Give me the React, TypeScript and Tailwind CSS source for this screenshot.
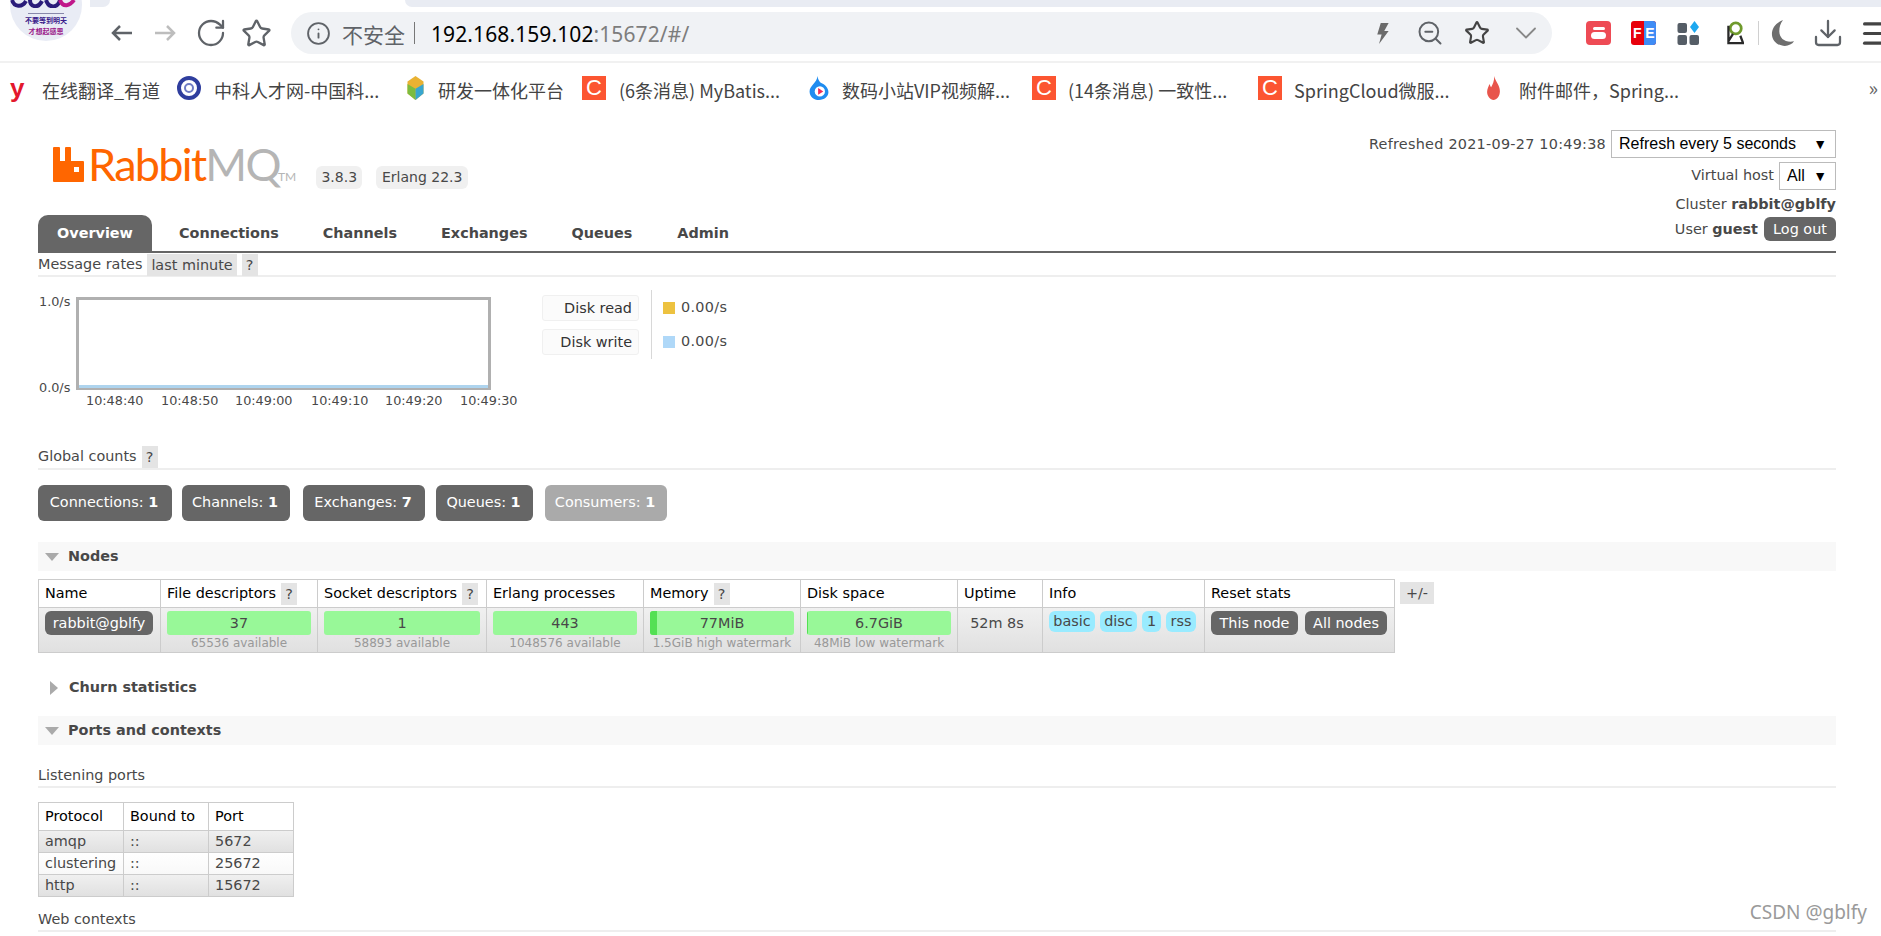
import React from "react";
import { ChevronDown, Download, Info, Menu, RotateCw, Star, ZoomOut } from "lucide-react";

const cjk = "font-['Noto_Sans_CJK_SC','Noto_Sans',sans-serif]";

const CIcon = () => (
  <span className="w-6 h-6 bg-[#fc5531] text-white text-[22px] leading-6 text-center shrink-0 font-['Liberation_Sans',sans-serif]">C</span>
);

const Bookmark = ({ icon, text, width, gap }: { icon: React.ReactNode; text: string; width: string; gap: string }) => (
  <div className={`flex items-center shrink-0 ${width}`}>
    {icon}
    <span className={`${gap} mt-[5px] whitespace-nowrap`}>{text}</span>
  </div>
);

const Help = () => <span className="bg-[#e4e4e4] h-[22px] w-4 ml-[5px] text-center leading-[22px] inline-block">?</span>;

const Section = ({ title, open, shaded }: { title: string; open?: boolean; shaded?: boolean }) => (
  <div className={`h-[29px] flex items-center font-bold ${shaded ? "bg-[#f8f8f8]" : ""}`}>
    {open ? (
      <span className="ml-[7px] w-0 h-0 border-x-[7px] border-x-transparent border-t-[8px] border-t-[#aaaaaa]" />
    ) : (
      <span className="ml-[12px] mr-[2px] w-0 h-0 border-y-[7px] border-y-transparent border-l-[8px] border-l-[#aaaaaa]" />
    )}
    <span className="ml-[9px]">{title}</span>
  </div>
);

const Count = ({ label, n, width, light }: { label: string; n: number; width: string; light?: boolean }) => (
  <div className={`h-9 rounded-[6px] flex items-center justify-center pr-[2px] text-white whitespace-nowrap ${width} ${light ? "bg-[#aaaaaa]" : "bg-[#666666]"}`}>
    {label}:&nbsp;<b>{n}</b>
  </div>
);

const Meter = ({ value, sub, used }: { value: string; sub: string; used?: string }) => (
  <td className="border border-[#cccccc] px-[6px] pt-[3px] align-top text-center">
    <div className="relative h-6 rounded-[3px] bg-[#98f898] leading-6 overflow-hidden">
      {used && <div className={`absolute left-0 top-0 bottom-0 bg-[#54e054] ${used}`} />}
      <span className="relative">{value}</span>
    </div>
    <div className="text-[12px] leading-[15px] text-[#999999] mt-px whitespace-nowrap">{sub}</div>
  </td>
);

const Th = ({ children, help }: { children: React.ReactNode; help?: boolean }) => (
  <th className="border border-[#cccccc] px-[6px] font-normal text-left text-black whitespace-nowrap">
    <div className="flex items-center">
      <span>{children}</span>
      {help && <span className="ml-[5px] bg-[#e4e4e4] h-[22px] w-4 text-center leading-[22px] text-[#484848]">?</span>}
    </div>
  </th>
);

const Badge = ({ children, width }: { children: React.ReactNode; width: string }) => (
  <span className={`bg-[#99ebff] rounded-[6px] h-[21px] leading-[21px] text-center ${width}`}>{children}</span>
);

const SmallButton = ({ children, className }: { children: React.ReactNode; className?: string }) => (
  <span className={`bg-[#666666] text-white rounded-[6px] h-6 leading-6 text-center whitespace-nowrap inline-block ${className ?? ""}`}>{children}</span>
);

const Legend = ({ label, color }: { label: string; color: string }) => (
  <div className="flex items-center h-[26px]">
    <div className="w-[97px] h-[26px] bg-[#fbfbfb] border border-[#f0f0f0] rounded-[3px] text-right pr-[6px] leading-[24px] text-[#333333]">{label}</div>
    <div className="w-[24px]" />
    <span className={`w-3 h-3 ${color}`} />
    <span className="ml-[6px] tracking-[0.3px]">0.00/s</span>
  </div>
);

const PortRow = ({ cells, gradient }: { cells: string[]; gradient: string }) => (
  <tr className={`h-[22px] ${gradient}`}>
    {cells.map((c) => (
      <td key={c} className="border border-[#cccccc] px-[6px] leading-none">{c}</td>
    ))}
  </tr>
);

const ArrowIcon = ({ flip, color }: { flip?: boolean; color: string }) => (
  <svg viewBox="0 0 22 18" className={`w-[22px] h-[18px] shrink-0 ${flip ? "-scale-x-100" : ""}`} fill="none" stroke={color} strokeWidth="2.500">
    <path d="M22 9H3M10 2 3 9l7 7" />
  </svg>
);

const App = () => {
  return (
    <div className="relative w-[1881px] h-[936px] overflow-hidden bg-white">
      {/* avatar of the tab strip */}
      <div className={`absolute left-[10px] top-[-31px] w-[72px] h-[72px] rounded-full bg-[#e9ecf5] overflow-hidden flex flex-col items-center pt-[31px] ${cjk}`}>
        <svg width="72" height="8" viewBox="0 0 72 8" className="shrink-0">
          <path d="M2 0c2 7 10 8 14 1M20 0c0 7 8 9 12 1M36 0c3 9 12 8 14 0" stroke="#2a1c7a" strokeWidth="4" fill="none" />
          <path d="M50 0c3 8 10 6 14 0" stroke="#c0178a" strokeWidth="4" fill="none" />
        </svg>
        <div className="w-9 h-px bg-[#8888aa] mt-[5px]" />
        <div className="text-[7px] leading-[11px] font-bold text-[#3a1a8a] whitespace-nowrap mt-[1px]">不要等到明天</div>
        <div className="text-[7px] leading-[11px] font-bold text-[#9a1a8a] whitespace-nowrap">才想起感恩</div>
      </div>

      {/* tab strip */}
      <div className="h-[7px] flex">
        <div className="w-[90px]" />
        <div className="w-[20px] bg-[#e9ecf3] rounded-br-lg" />
        <div className="w-[295px]" />
        <div className="flex-1 bg-[#e9ecf3] rounded-bl-lg" />
      </div>

      {/* toolbar */}
      <div className="h-[56px] border-b-2 border-[#f1f1f1] flex items-center pb-[2px] text-[#5f6368]">
        <div className="w-[110px] shrink-0" />
        <ArrowIcon color="#5f6368" />
        <div className="w-[23px] shrink-0" />
        <ArrowIcon flip color="#bdbdbd" />
        <RotateCw className="ml-[18px] w-8 h-8 shrink-0" strokeWidth={1.700} />
        <Star className="ml-[14px] w-[31px] h-[31px] shrink-0" strokeWidth={1.800} />
        <div className="ml-[19px] w-[1261px] h-[42px] rounded-[21px] bg-[#f0f2f5] flex items-center shrink-0">
          <Info className="ml-[15px] w-[25px] h-[25px] shrink-0" strokeWidth={1.800} />
          <span className={`ml-[11px] pt-[3px] text-[21px] text-[#5f6368] whitespace-nowrap ${cjk}`}>不安全</span>
          <span className="ml-[9px] w-px h-[22px] bg-[#777777]" />
          <span className="ml-[16px] pt-[3px] text-[21px] tracking-[0.1px] text-black font-['Noto_Sans',sans-serif] whitespace-nowrap">
            192.168.159.102<span className="text-[#7d7d7d]">:15672/#/</span>
          </span>
          <div className="flex-1" />
          <svg viewBox="0 0 16 24" className="w-[15px] h-[21px] fill-[#6b6b6b] shrink-0"><path d="M6 0h9L10 9h5L4 24l3-11H2z" /></svg>
          <ZoomOut className="ml-[26px] w-7 h-7 shrink-0" strokeWidth={1.700} />
          <Star className="ml-[20px] w-[26px] h-[26px] text-[#444444] shrink-0" strokeWidth={2} />
          <ChevronDown className="ml-[18px] mr-[8px] w-9 h-9 text-[#888888] shrink-0" strokeWidth={1.200} />
        </div>
        <div className="ml-[34px] w-[25px] h-[24px] rounded-[4px] bg-[#ee4b55] flex flex-col items-center justify-center gap-[2px] shrink-0">
          <span className="w-[12px] h-[3px] bg-white rounded-sm" />
          <span className="w-[15px] h-[7px] bg-white rounded-sm" />
        </div>
        <div className="ml-[20px] w-[25px] h-[24px] rounded-[3px] bg-[#e8000b] text-white text-[14px] font-bold leading-6 flex overflow-hidden shrink-0 font-['Liberation_Sans',sans-serif]">
          <span className="w-[13px] pl-[2px]">F</span>
          <span className="w-[12px] bg-[#3f8cf5] text-center">E</span>
        </div>
        <svg viewBox="0 0 22 24" className="ml-[21px] w-[23px] h-[24px] shrink-0">
          <rect x="0" y="2" width="9.500" height="10" rx="2" fill="#555d66" />
          <rect x="0" y="14" width="9.500" height="10" rx="2" fill="#555d66" />
          <rect x="12" y="14" width="9.500" height="10" rx="2" fill="#555d66" />
          <path d="M17 0l4.500 6-4.500 6-4.500-6z" fill="#1da8f0" />
        </svg>
        <svg viewBox="0 0 24 26" className="ml-[22px] w-[22px] h-[26px] shrink-0" fill="none">
          <circle cx="15" cy="8" r="6" stroke="#6f9a2c" strokeWidth="3" />
          <path d="M7 5v19h16l-3-8M12 14l-5 8" stroke="#2a2a2a" strokeWidth="2.500" />
        </svg>
        <span className="ml-[14px] w-px h-[24px] bg-[#d0d0d0] shrink-0" />
        <svg viewBox="0 0 26 28" className="ml-[12px] w-[24px] h-[28px] fill-[#6e6e6e] shrink-0"><path d="M13 0C5 3 1 9 1 15c0 8 7 13 14 13 4 0 8-2 10-5-9 2-16-3-16-11 0-4 1-8 4-12z" /></svg>
        <Download className="ml-[17px] w-8 h-8 shrink-0" strokeWidth={1.700} />
        <Menu className="ml-[15px] w-[33px] h-[33px] text-[#444444] shrink-0" strokeWidth={2.200} />
      </div>

      {/* bookmarks bar */}
      <div className={`h-[44px] flex items-center pl-[10px] pt-[5px] text-[18px] text-[#444444] ${cjk}`}>
        <Bookmark
          width="w-[167px]"
          gap="ml-[16px]"
          text="在线翻译_有道"
          icon={<span className="w-4 text-[26px] leading-6 font-bold text-[#e3182d] font-['Liberation_Sans',sans-serif]">y</span>}
        />
        <Bookmark
          width="w-[225px]"
          gap="ml-[13px]"
          text="中科人才网-中国科..."
          icon={
            <span className="w-6 h-6 rounded-full border-[4px] border-[#2f3e9e] bg-white flex items-center justify-center shrink-0">
              <span className="w-[10px] h-[10px] rounded-full border-2 border-[#6f7cc4]" />
            </span>
          }
        />
        <Bookmark
          width="w-[180px]"
          gap="ml-[9px]"
          text="研发一体化平台"
          icon={
            <svg viewBox="0 0 24 30" className="w-[27px] h-6 shrink-0">
              <path d="M12 0l10 7v15l-10 8-10-8V7z" fill="#e9b233" />
              <path d="M2 10l10 6v14l-10-8z" fill="#7cbc3f" />
              <path d="M12 16l10-6v12l-10 8z" fill="#38a6cf" />
            </svg>
          }
        />
        <Bookmark width="w-[226px]" gap="ml-[13px]" text="(6条消息) MyBatis..." icon={<CIcon />} />
        <Bookmark
          width="w-[224px]"
          gap="ml-[12px]"
          text="数码小站VIP视频解..."
          icon={
            <svg viewBox="0 0 22 28" className="w-[22px] h-6 shrink-0">
              <path d="M9 0c1 4 2 6 4 8 5 2 9 6 9 11 0 5-5 9-11 9S0 24 0 18C0 11 9 8 9 0z" fill="#1f8cf0" />
              <circle cx="12" cy="18" r="6" fill="#fff" />
              <path d="M10 14l6 4-6 4z" fill="#ee2b5b" />
            </svg>
          }
        />
        <Bookmark width="w-[226px]" gap="ml-[12px]" text="(14条消息) 一致性..." icon={<CIcon />} />
        <Bookmark width="w-[228px]" gap="ml-[12px]" text="SpringCloud微服..." icon={<CIcon />} />
        <Bookmark
          width="w-[300px]"
          gap="ml-[18px]"
          text="附件邮件，Spring..."
          icon={
            <svg viewBox="0 0 16 30" className="w-[15px] h-6 fill-[#e8554c] shrink-0">
              <path d="M9 0c1 7 7 11 7 19 0 6-4 11-8 11s-8-5-8-10c0-4 2-7 3-10 1 2 1 3 2 4 2-3 4-8 4-14z" />
            </svg>
          }
        />
        <span className="ml-auto mr-[3px] text-[20px] text-[#666666]">»</span>
      </div>

      {/* page */}
      <div className="mx-[38px] w-[1798px] text-[14.400px] text-[#484848] font-['DejaVu_Sans',sans-serif]">
        <div className="flex justify-between h-[144px]">
          <div className="flex flex-col justify-between">
            <div className="flex items-start pt-[40px]">
              <svg viewBox="0 0 31 35" className="ml-[15px] w-[31px] h-[35px] fill-[#ff6600] shrink-0">
                <path fillRule="evenodd" d="M1 0h5a1 1 0 0 1 1 1v13h5V1a1 1 0 0 1 1-1h4a1 1 0 0 1 1 1v13h12a1 1 0 0 1 1 1v19a1 1 0 0 1-1 1H1a1 1 0 0 1-1-1V1a1 1 0 0 1 1-1zM21 20v5h5v-5z" />
              </svg>
              <span className="ml-[4px] w-[190px] text-[45px] leading-[35px] font-normal tracking-[-1.700px] text-[#ff6600] font-['Lato',sans-serif] whitespace-nowrap">
                Rabbit<span className="text-[#b5b5b5]">MQ</span>
              </span>
              <span className="mt-[24px] text-[12px] leading-3 text-[#b5b5b5] font-['Lato',sans-serif]">TM</span>
              <span className="ml-[20px] mt-[19px] h-[23px] leading-[23px] w-[46px] text-center text-[14px] rounded-[6px] bg-[#f0f0f0]">3.8.3</span>
              <span className="ml-[14px] mt-[19px] h-[23px] leading-[23px] w-[92px] text-center text-[14px] rounded-[6px] bg-[#f0f0f0]">Erlang 22.3</span>
            </div>
            <div className="flex h-9 font-bold">
              <div className="w-[114px] pt-px rounded-t-[10px] bg-[#666666] text-white flex items-center justify-center">Overview</div>
              <div className="pl-[27px] pr-[22px] pt-px flex items-center">Connections</div>
              <div className="px-[22px] pt-px flex items-center">Channels</div>
              <div className="px-[22px] pt-px flex items-center">Exchanges</div>
              <div className="px-[22px] pt-px flex items-center">Queues</div>
              <div className="px-[23px] pt-px flex items-center">Admin</div>
            </div>
          </div>
          <div className="flex flex-col items-end pt-[23px]">
            <div className="flex items-center h-[28px]">
              <span className="mr-[5px] pt-px tracking-[0.25px]">Refreshed 2021-09-27 10:49:38</span>
              <div className="w-[225px] h-[28px] border border-[#bbbbbb] text-[16px] text-black pl-[7px] pr-[8px] flex items-center justify-between font-['Liberation_Sans',sans-serif]">
                <span>Refresh every 5 seconds</span>
                <span className="text-[14px]">▼</span>
              </div>
            </div>
            <div className="flex items-center h-[28px] mt-[4px]">
              <span className="mr-[5px]">Virtual host</span>
              <div className="w-[57px] h-[28px] border border-[#bbbbbb] text-[16px] text-black pl-[7px] pr-[8px] flex items-center justify-between font-['Liberation_Sans',sans-serif]">
                <span>All</span>
                <span className="text-[14px]">▼</span>
              </div>
            </div>
            <div className="mt-[4px] h-[20px] leading-[20px]">Cluster <b>rabbit@gblfy</b></div>
            <div className="mt-[3px] flex items-center h-6">
              <span className="pt-px">User <b>guest</b></span>
              <SmallButton className="ml-[6px] w-[72px]">Log out</SmallButton>
            </div>
          </div>
        </div>
        <div className="h-[2px] bg-[#666666]" />

        <div className="h-[24px] border-b-2 border-[#eeeeee] flex items-center pt-px">
          <span>Message rates</span>
          <span className="ml-[5px] bg-[#e4e4e4] h-[22px] leading-[22px] px-[4px] whitespace-nowrap">last minute</span>
          <Help />
        </div>

        <div className="flex h-[170px]">
          <div className="relative w-[480px] h-[140px] shrink-0 text-[12.800px]">
            <span className="absolute left-[1px] top-[19px] leading-none">1.0/s</span>
            <span className="absolute left-[1px] top-[105px] leading-none">0.0/s</span>
            <div className="absolute left-[38px] top-[20px] w-[415px] h-[93px] border-[3px] border-[#b0b0b0] border-b-2">
              <div className="absolute left-0 right-0 bottom-0 h-[3px] bg-[#aed4ee]" />
            </div>
            <span className="absolute left-[48px] top-[118px] leading-none">10:48:40</span>
            <span className="absolute left-[123px] top-[118px] leading-none">10:48:50</span>
            <span className="absolute left-[197px] top-[118px] leading-none">10:49:00</span>
            <span className="absolute left-[273px] top-[118px] leading-none">10:49:10</span>
            <span className="absolute left-[347px] top-[118px] leading-none">10:49:20</span>
            <span className="absolute left-[422px] top-[118px] leading-none">10:49:30</span>
          </div>
          <div className="ml-[24px] mt-[18px] relative flex flex-col gap-[8px] pt-0 self-start">
            <div className="absolute left-[109px] top-[-5px] w-px h-[69px] bg-[#d8d8d8]" />
            <Legend label="Disk read" color="bg-[#edc240]" />
            <Legend label="Disk write" color="bg-[#afd8f8]" />
          </div>
        </div>

        <div className="h-[24px] border-b-2 border-[#eeeeee] flex items-center -mt-[1px]">
          <span>Global counts</span>
          <Help />
        </div>

        <div className="flex mt-[15px]">
          <Count label="Connections" n={1} width="w-[134px]" />
          <Count label="Channels" n={1} width="w-[108px] ml-[10px]" />
          <Count label="Exchanges" n={7} width="w-[122px] ml-[13px]" />
          <Count label="Queues" n={1} width="w-[97px] ml-[11px]" />
          <Count label="Consumers" n={1} width="w-[122px] ml-[12px]" light />
        </div>

        <div className="mt-[21px]">
          <Section title="Nodes" open shaded />
        </div>

        <div className="flex items-start mt-2">
          <table className="table-fixed border-collapse w-[1356px]">
            <colgroup>
              <col className="w-[122px]" />
              <col className="w-[157px]" />
              <col className="w-[169px]" />
              <col className="w-[157px]" />
              <col className="w-[157px]" />
              <col className="w-[157px]" />
              <col className="w-[85px]" />
              <col className="w-[162px]" />
              <col className="w-[190px]" />
            </colgroup>
            <thead>
              <tr className="h-[28px]">
                <Th>Name</Th>
                <Th help>File descriptors</Th>
                <Th help>Socket descriptors</Th>
                <Th>Erlang processes</Th>
                <Th help>Memory</Th>
                <Th>Disk space</Th>
                <Th>Uptime</Th>
                <Th>Info</Th>
                <Th>Reset stats</Th>
              </tr>
            </thead>
            <tbody>
              <tr className="h-[45px] bg-gradient-to-b from-[#f0f0f0] to-[#e0e0e0]">
                <td className="border border-[#cccccc] px-[6px] pt-[3px] align-top">
                  <SmallButton className="w-[108px]">rabbit@gblfy</SmallButton>
                </td>
                <Meter value="37" sub="65536 available" />
                <Meter value="1" sub="58893 available" />
                <Meter value="443" sub="1048576 available" />
                <Meter value="77MiB" sub="1.5GiB high watermark" used="w-[7px]" />
                <Meter value="6.7GiB" sub="48MiB low watermark" used="w-px" />
                <td className="border border-[#cccccc] pt-[3px] pr-[6px] align-top text-center leading-6">52m 8s</td>
                <td className="border border-[#cccccc] px-[6px] pt-[3px] align-top">
                  <div className="flex gap-[5px]">
                    <Badge width="w-[46px]">basic</Badge>
                    <Badge width="w-[37px]">disc</Badge>
                    <Badge width="w-[19px]">1</Badge>
                    <Badge width="w-[30px]">rss</Badge>
                  </div>
                </td>
                <td className="border border-[#cccccc] px-[6px] pt-[3px] align-top">
                  <div className="flex gap-[7px]">
                    <SmallButton className="w-[87px]">This node</SmallButton>
                    <SmallButton className="w-[82px]">All nodes</SmallButton>
                  </div>
                </td>
              </tr>
            </tbody>
          </table>
          <span className="ml-[5px] mt-[3px] w-[34px] h-[22px] bg-[#e4e4e4] text-center leading-[22px]">+/-</span>
        </div>

        <div className="mt-[20px]">
          <Section title="Churn statistics" />
        </div>
        <div className="mt-[14px]">
          <Section title="Ports and contexts" open shaded />
        </div>

        <div className="mt-[20px] h-[23px] border-b-2 border-[#eeeeee] leading-[20px]">Listening ports</div>

        <table className="table-fixed border-collapse w-[255px] mt-[14px]">
          <colgroup>
            <col className="w-[85px]" />
            <col className="w-[85px]" />
            <col className="w-[85px]" />
          </colgroup>
          <thead>
            <tr className="h-[28px]">
              <Th>Protocol</Th>
              <Th>Bound to</Th>
              <Th>Port</Th>
            </tr>
          </thead>
          <tbody>
            <PortRow cells={["amqp", "::", "5672"]} gradient="bg-gradient-to-b from-[#f0f0f0] to-[#e0e0e0]" />
            <PortRow cells={["clustering", "::", "25672"]} gradient="bg-gradient-to-b from-[#ffffff] to-[#f8f8f8]" />
            <PortRow cells={["http", "::", "15672"]} gradient="bg-gradient-to-b from-[#f0f0f0] to-[#e0e0e0]" />
          </tbody>
        </table>

        <div className="mt-[12px] h-[23px] border-b-2 border-[#eeeeee] leading-[20px]">Web contexts</div>
      </div>

      <span className="absolute right-[14px] bottom-[10px] text-[19px] text-[#9a9a9a] font-['Noto_Sans',sans-serif]">CSDN @gblfy</span>
    </div>
  );
};

export default App;
